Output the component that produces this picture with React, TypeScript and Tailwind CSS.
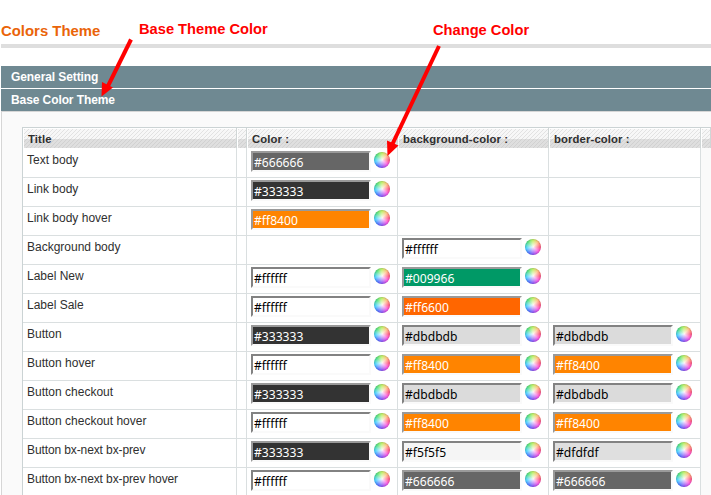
type Row = { title: string; cells: (string | null)[] };

const rows: Row[] = [
  { title: "Text body", cells: ["#666666", null, null] },
  { title: "Link body", cells: ["#333333", null, null] },
  { title: "Link body hover", cells: ["#ff8400", null, null] },
  { title: "Background body", cells: [null, "#ffffff", null] },
  { title: "Label New", cells: ["#ffffff", "#009966", null] },
  { title: "Label Sale", cells: ["#ffffff", "#ff6600", null] },
  { title: "Button", cells: ["#333333", "#dbdbdb", "#dbdbdb"] },
  { title: "Button hover", cells: ["#ffffff", "#ff8400", "#ff8400"] },
  { title: "Button checkout", cells: ["#333333", "#dbdbdb", "#dbdbdb"] },
  { title: "Button checkout hover", cells: ["#ffffff", "#ff8400", "#ff8400"] },
  { title: "Button bx-next bx-prev", cells: ["#333333", "#f5f5f5", "#dfdfdf"] },
  { title: "Button bx-next bx-prev hover", cells: ["#ffffff", "#666666", "#666666"] },
];

const darkText = ["#ffffff", "#dbdbdb", "#f5f5f5", "#dfdfdf"];

function ColorWheel() {
  return (
    <span className="mt-px h-4 w-4 shrink-0 rounded-full bg-[radial-gradient(circle_at_50%_50%,rgba(255,255,255,0.95)_0%,rgba(255,255,255,0.5)_38%,rgba(255,255,255,0.1)_68%),conic-gradient(#b0ec40,#ffb060_45deg,#ff3060_90deg,#f830d8_130deg,#8030f0_175deg,#3058ff_215deg,#20c8ff_260deg,#30dc60_315deg,#b0ec40)] shadow-[inset_0_0_1px_0.5px_rgba(90,90,110,0.3)]" />
  );
}

function ColorField({ value }: { value: string }) {
  const dark = darkText.includes(value);
  return (
    <div className="flex items-start gap-[3px] pt-[2px] pl-1">
      <div
        className={`h-[21px] w-[120px] border-2 pt-px pl-px font-['Noto_Sans',sans-serif] text-[12.1px] leading-[18px] ${
          dark
            ? "border-t-[#828282] border-r-[#fafafa] border-b-[#fafafa] border-l-[#828282] text-black"
            : "border-t-[#9a9a9a] border-r-[#fafafa] border-b-[#fafafa] border-l-[#9a9a9a] text-white"
        }`}
        style={{ backgroundColor: value }}
      >
        {value}
      </div>
      <ColorWheel />
    </div>
  );
}

function HeadCell({ children }: { children?: string }) {
  return (
    <div className="border-r border-[#d0d6d6] pt-px pl-px">
      <div className="h-[19px] bg-[linear-gradient(rgba(255,255,255,0.3)_0_10px,rgba(205,205,205,0.55)_10px),repeating-linear-gradient(135deg,#d6d6d6_0_1.06px,#f4f4f4_1.06px_2.83px)] pl-1 text-[11.3px] leading-[21px] font-bold tracking-[0.12px] whitespace-nowrap text-[#2f2f2f]">
        {children}
      </div>
    </div>
  );
}

function Arrows() {
  return (
    <svg className="pointer-events-none absolute inset-0" width="711" height="495" fill="#ff0000" stroke="#ff0000">
      <path d="M131 39.5 107 88" strokeWidth="4" />
      <path d="M101.5 96.5 102 82 113 87.5Z" stroke="none" />
      <path d="M439 46 392 145" strokeWidth="4" />
      <path d="M387.5 156 387 140.500 398.500 145.500Z" stroke="none" />
    </svg>
  );
}

export default function App() {
  return (
    <div className="relative h-[495px] w-[711px] overflow-hidden bg-white pl-px font-['Liberation_Sans',Arial,sans-serif]">
      <header className="flex h-[48px] items-start border-b-4 border-[#dedede] text-[14.67px] leading-[17px] font-bold text-[#ff0000]">
        <h1 className="w-[138px] pt-[23px] text-[14.9px] text-[#ea6409]">Colors Theme</h1>
        <span className="w-[294px] pt-[21px]">Base Theme Color</span>
        <span className="pt-[22px]">Change Color</span>
      </header>

      <nav className="mt-[18px] flex flex-col gap-px text-[12px] leading-[22px] font-bold tracking-[-0.09px] text-white">
        <div className="h-[22px] bg-[#6f8992] pl-[10px]">General Setting</div>
        <div className="h-[22px] bg-[#6f8992] pl-[10px]">Base Color Theme</div>
      </nav>

      <main className="h-[384px] overflow-hidden border-t border-l border-[#d6d6d6] bg-[#fafafa] pt-[15px] pl-[20px]">
        <div className="w-[689px] border-t border-l border-[#cbd3d4]">
          <div className="grid h-[20px] grid-cols-[214px_10px_151px_151px_152px_10px] bg-white">
            <HeadCell>Title</HeadCell>
            <HeadCell />
            <HeadCell>Color :</HeadCell>
            <HeadCell>background-color :</HeadCell>
            <HeadCell>border-color :</HeadCell>
            <HeadCell />
          </div>
          <div className="grid w-[678px] grid-cols-[214px_10px_151px_151px_152px] bg-white">
            {["title", "gap", "color", "background", "border"].map((column) => (
              <div key={column} className="h-px border-r border-[#dadfe0]" />
            ))}
          </div>
          {rows.map((row) => (
            <div key={row.title} className="grid h-[29px] w-[678px] grid-cols-[214px_10px_151px_151px_152px] bg-white">
              <div
                className={`border-r border-b border-[#dadfe0] pt-[4px] pl-1 text-[12px] leading-[14px] text-[#2f2f2f] ${
                  row.title.includes("bx-") ? "tracking-[-0.11px]" : ""
                }`}
              >
                {row.title}
              </div>
              <div className="border-r border-b border-[#dadfe0]" />
              {row.cells.map((value, i) => (
                <div key={i} className="border-r border-b border-[#dadfe0]">
                  {value && <ColorField value={value} />}
                </div>
              ))}
            </div>
          ))}
        </div>
      </main>
      <Arrows />
    </div>
  );
}
